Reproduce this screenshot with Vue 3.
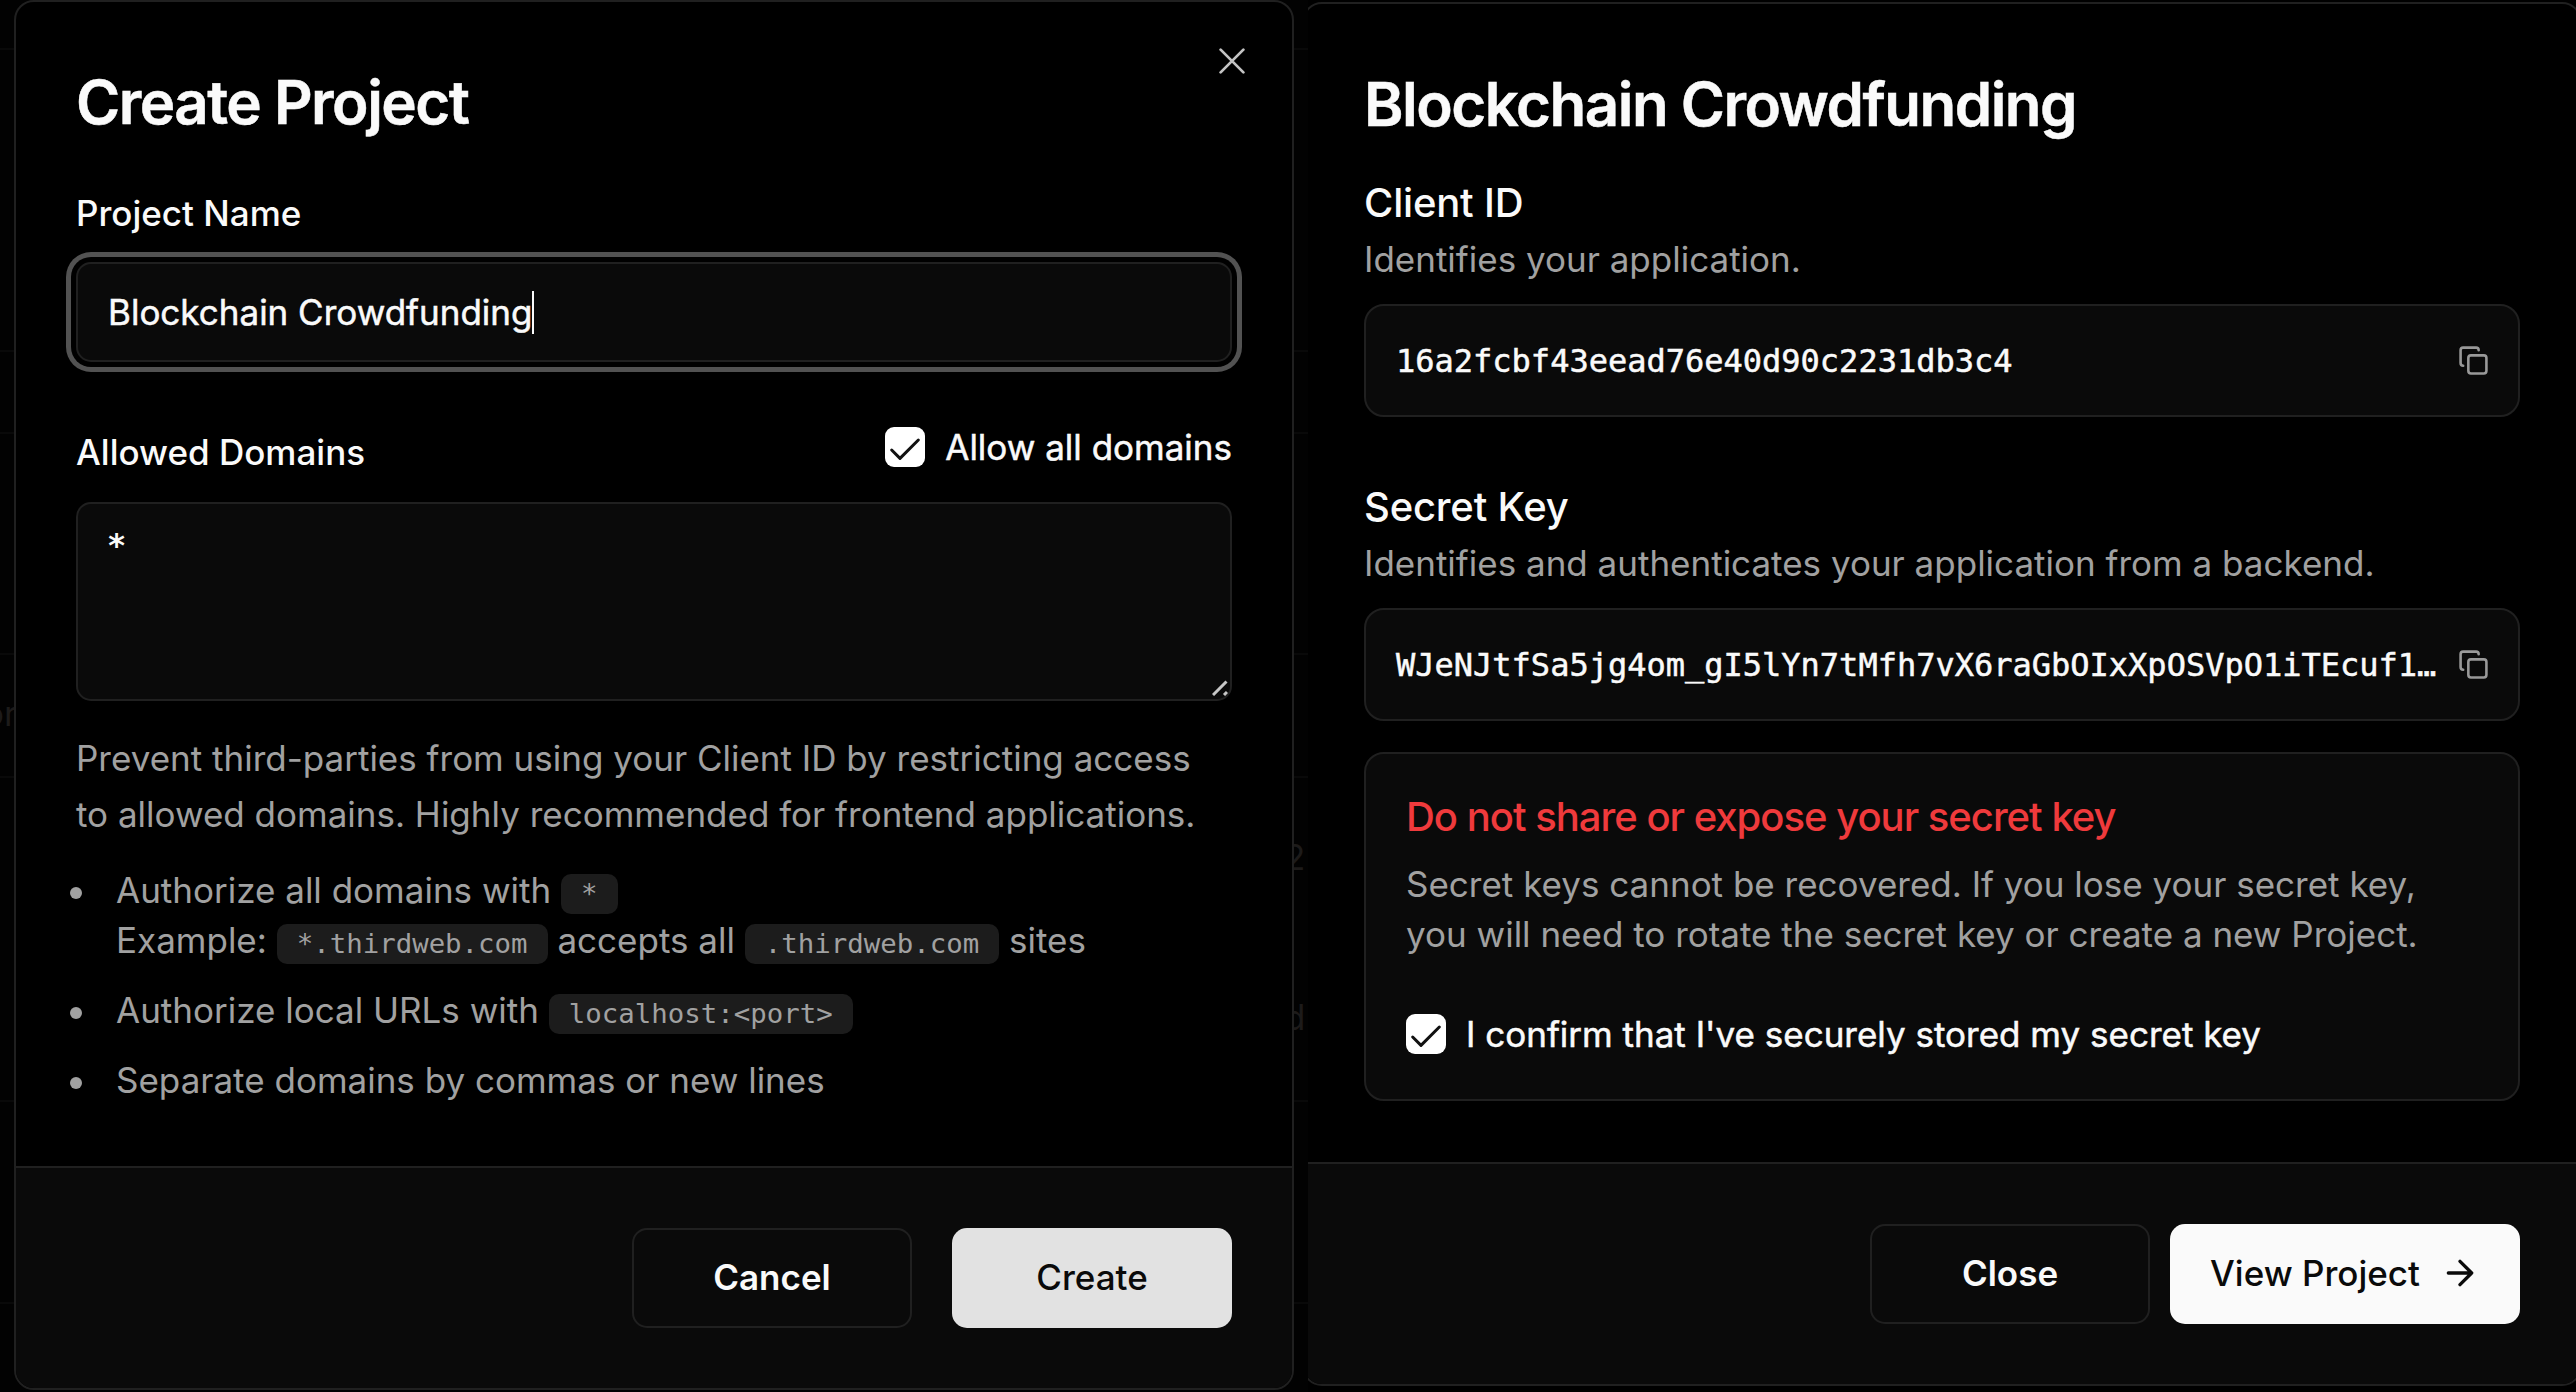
<script setup>
import { ref } from 'vue'

const projectName = ref('Blockchain Crowdfunding')
const credentials = [
  {
    title: 'Client ID',
    hint: 'Identifies your application.',
    value: '16a2fcbf43eead76e40d90c2231db3c4',
  },
  {
    title: 'Secret Key',
    hint: 'Identifies and authenticates your application from a backend.',
    value: 'WJeNJtfSa5jg4om_gI5lYn7tMfh7vX6raGbOIxXpOSVpO1iTEcuf1…',
  },
]
const backdropLines = [48, 350, 432, 653, 776, 1100, 1302]
</script>

<template>
  <main class="stage">
    <section class="half left">
      <div class="backdrop">
        <i v-for="y in backdropLines" :key="y" class="rule" :style="{ top: y + 'px' }"></i>
        <span class="ghost g1">or</span>
        <span class="ghost g2">2</span>
        <span class="ghost g3">d</span>
      </div>

      <div class="dialog create">
        <svg class="close" viewBox="0 0 24 24"><path d="M1.5 1.5l21 21M22.5 1.5l-21 21" /></svg>
        <div class="body">
          <h1>Create Project</h1>
          <label class="label name-label">Project Name</label>
          <div class="input"><span class="name">{{ projectName }}</span><i class="caret"></i></div>

          <div class="row">
            <label class="label">Allowed Domains</label>
            <div class="check">
              <span class="box"><svg viewBox="0 0 24 24"><path d="M20 6 9 17l-5-5" /></svg></span>
              <span>Allow all domains</span>
            </div>
          </div>

          <div class="textarea">
            <span>*</span>
            <svg class="grip" viewBox="0 0 16 16"><path d="M1 15 14.5 1.5M12 15l3-3" /></svg>
          </div>

          <p class="desc">
            Prevent third-parties from using your Client ID by restricting access<br />
            to allowed domains. Highly recommended for frontend applications.
          </p>

          <ul>
            <li>
              Authorize all domains with <code>*</code><br />
              Example: <code>*.thirdweb.com</code> accepts all <code>.thirdweb.com</code> sites
            </li>
            <li>Authorize local URLs with <code>localhost:&lt;port&gt;</code></li>
            <li>Separate domains by commas or new lines</li>
          </ul>
        </div>
        <footer>
          <button class="btn outline">Cancel</button>
          <button class="btn solid pressed">Create</button>
        </footer>
      </div>
    </section>

    <section class="half right">
      <div class="dialog details">
        <div class="body">
          <h1>Blockchain Crowdfunding</h1>
          <div v-for="item in credentials" :key="item.title" class="credential">
            <h2>{{ item.title }}</h2>
            <p class="hint">{{ item.hint }}</p>
            <div class="key">
              <span class="mono">{{ item.value }}</span>
              <svg class="copy" viewBox="0 0 24 24">
                <rect x="8" y="8" width="14" height="14" rx="2" />
                <path d="M4 16c-1.1 0-2-.9-2-2V4c0-1.1.9-2 2-2h10c1.1 0 2 .9 2 2" />
              </svg>
            </div>
          </div>

          <div class="warning">
            <h2>Do not share or expose your secret key</h2>
            <p>
              Secret keys cannot be recovered. If you lose your secret key,<br />
              you will need to rotate the secret key or create a new Project.
            </p>
            <div class="check">
              <span class="box"><svg viewBox="0 0 24 24"><path d="M20 6 9 17l-5-5" /></svg></span>
              <span>I confirm that I've securely stored my secret key</span>
            </div>
          </div>
        </div>
        <footer>
          <button class="btn outline">Close</button>
          <button class="btn solid wide">
            View Project
            <svg viewBox="0 0 24 24"><path d="M5 12h14M12 5l7 7-7 7" /></svg>
          </button>
        </footer>
      </div>
    </section>
  </main>
</template>

<style>
body {
  background: #000;
}
</style>

<style scoped>
* {
  box-sizing: border-box;
}
h1, h2, p, ul {
  margin: 0;
  padding: 0;
}
svg {
  fill: none;
  stroke: currentColor;
  stroke-width: 2;
  stroke-linecap: round;
  stroke-linejoin: round;
  flex: none;
}
.stage {
  display: flex;
  width: 2576px;
  height: 1392px;
  overflow: hidden;
  background: #000;
  color: #fafafa;
  font: 400 35px/50px Inter, sans-serif;
}
.half {
  position: relative;
  overflow: hidden;
  height: 1392px;
  flex: none;
}
.left {
  width: 1308px;
  padding-left: 14px;
}
.right {
  width: 1268px;
  padding-top: 2px;
}
.backdrop {
  position: absolute;
  inset: 0;
  background: #020202;
}
.rule {
  position: absolute;
  left: 0;
  right: 0;
  height: 2px;
  background: #090909;
}
.ghost {
  position: absolute;
  color: #1d1b1a;
}
.g1 { left: -17px; top: 688px; }
.g2 { left: 1284px; top: 832px; font-size: 35px; }
.g3 { left: 1284px; top: 992px; }

.dialog {
  position: relative;
  display: flex;
  flex-direction: column;
  border: 2px solid #202020;
  background: #000;
  overflow: hidden;
}
.create {
  width: 1280px;
  height: 1390px;
  border-radius: 20px;
}
.details {
  width: 1280px;
  height: 1384px;
  margin-left: -6px;
  border-radius: 20px;
}
.body {
  flex: 1;
  padding: 70px 60px 0;
}
h1 {
  font-size: 60px;
  line-height: 60px;
  font-weight: 600;
  letter-spacing: -0.025em;
  white-space: nowrap;
  -webkit-text-stroke: 0.5px currentColor;
}
h2 {
  font-size: 40px;
  line-height: 60px;
  font-weight: 500;
  letter-spacing: -0.2px;
  white-space: nowrap;
}
.close {
  position: absolute;
  right: 47px;
  top: 46px;
  width: 26px;
  height: 26px;
  color: #c2c2c2;
  stroke-width: 2.5;
}
.label {
  display: block;
  font-weight: 500;
  white-space: nowrap;
}
.name-label {
  margin-top: 56px;
}
.input {
  display: flex;
  align-items: center;
  width: 1156px;
  height: 100px;
  margin-top: 24px;
  padding: 0 30px;
  border: 2px solid #202020;
  border-radius: 15px;
  background: #0a0a0a;
  box-shadow: 0 0 0 5px #000, 0 0 0 10px #525252;
}
.name {
  -webkit-text-stroke: 0.5px currentColor;
}
.caret {
  width: 2px;
  height: 43px;
  background: #fafafa;
}
.row {
  display: flex;
  justify-content: space-between;
  height: 56px;
  margin-top: 60px;
}
.row .label {
  padding-top: 5px;
}
.check {
  display: flex;
  gap: 20px;
  height: 50px;
  white-space: nowrap;
  -webkit-text-stroke: 0.5px currentColor;
}
.box {
  width: 40px;
  height: 40px;
  margin-top: 5px;
  border-radius: 9px;
  background: #fff;
  color: #111;
}
.box svg {
  display: block;
  width: 40px;
  height: 40px;
  margin-top: 3px;
  stroke-width: 1.8;
}
.textarea {
  position: relative;
  width: 1156px;
  height: 199px;
  margin-top: 24px;
  padding: 16px 29px;
  border: 2px solid #202020;
  border-radius: 15px;
  background: #0a0a0a;
  font: 700 32px/50px "DejaVu Sans Mono", monospace;
}
.grip {
  position: absolute;
  right: 2px;
  bottom: 3px;
  width: 16px;
  height: 16px;
  color: #c8c8c8;
  stroke-width: 3;
  stroke-linecap: butt;
}
.desc {
  margin-top: 29px;
  color: #a1a1a1;
  line-height: 56px;
  white-space: nowrap;
}
ul {
  display: flex;
  flex-direction: column;
  gap: 20px;
  margin-top: 23px;
  color: #a1a1a1;
  list-style: none;
}
li {
  position: relative;
  padding-left: 40px;
  white-space: nowrap;
}
li::before {
  content: "";
  position: absolute;
  left: -6px;
  top: 22px;
  width: 12px;
  height: 12px;
  border-radius: 50%;
  background: #a1a1a1;
}
code {
  display: inline-block;
  height: 40px;
  padding: 0 20px;
  border-radius: 10px;
  background: #1c1c1c;
  font: 400 27.4px/40px "DejaVu Sans Mono", monospace;
  vertical-align: baseline;
}
footer {
  display: flex;
  justify-content: flex-end;
  gap: 40px;
  height: 222px;
  padding: 60px 60px 0 0;
  border-top: 2px solid #202020;
  background: #0a0a0a;
}
.btn {
  display: flex;
  align-items: center;
  justify-content: center;
  width: 280px;
  height: 100px;
  padding: 0 0 2px;
  border-radius: 15px;
  font: 500 35px/50px Inter, sans-serif;
}
.outline {
  border: 2px solid #202020;
  background: #0a0a0a;
  color: #fafafa;
  font-weight: 600;
}
.solid {
  border: 0;
  background: #fafafa;
  color: #0a0a0a;
}
.pressed {
  background: #e2e2e2;
}
.details footer {
  gap: 20px;
}
.wide {
  width: 350px;
  gap: 20px;
}
.wide svg {
  width: 40px;
  height: 40px;
}
.credential {
  height: 304px;
}
h1 + .credential {
  margin-top: 39px;
}
.hint {
  margin-top: 1px;
  color: #a1a1a1;
  white-space: nowrap;
}
.key {
  display: flex;
  align-items: center;
  justify-content: space-between;
  width: 1156px;
  height: 113px;
  margin-top: 20px;
  padding: 0 29px 0 30px;
  border: 2px solid #202020;
  border-radius: 20px;
  background: #0a0a0a;
}
.mono {
  font: 400 32px/50px "DejaVu Sans Mono", monospace;
  -webkit-text-stroke: 0.5px currentColor;
}
.copy {
  width: 31px;
  height: 31px;
  color: #999;
}
.warning {
  width: 1156px;
  height: 349px;
  margin-top: -29px;
  padding: 33px 40px 0;
  border: 2px solid #202020;
  border-radius: 20px;
  background: #0a0a0a;
}
.warning h2 {
  color: #ef3a3c;
  letter-spacing: -0.025em;
}
.warning p {
  margin-top: 12px;
  color: #a1a1a1;
  white-space: nowrap;
}
.warning .check {
  margin-top: 50px;
}
</style>
